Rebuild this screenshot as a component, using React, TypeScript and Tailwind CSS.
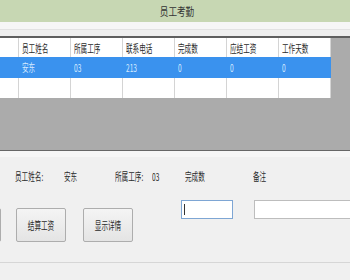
const cols = ["员工姓名", "所属工序", "联系电话", "完成数", "应结工资", "工作天数"];
const row = ["安东", "03", "213", "0", "0", "0"];

const Txt = ({ children, center = false }: { children: React.ReactNode; center?: boolean }) => (
    <span className={`inline-block whitespace-nowrap scale-x-[0.6] ${center ? "origin-center" : "origin-left"}`}>{children}</span>
);

const btn = "shrink-0 h-[34px] mt-[8px] border border-[#adadad] rounded-[2px] bg-gradient-to-b from-[#f4f4f4] to-[#e4e4e4] flex items-center justify-center";

const App = () => {
    return (
        <div className="w-[350px] h-[280px] overflow-hidden bg-[#f0f0f0] flex flex-col text-[11px] leading-none text-[#2a2a2a]" style={{ fontFamily: '"Noto Sans CJK SC", "Liberation Sans", sans-serif' }}>
            {/* title bar */}
            <div className="h-[22px] shrink-0 bg-[#c7d7b3] flex items-center justify-center pl-[4px]">
                <span className="inline-block scale-x-[0.78] text-[#333]">员工考勤</span>
            </div>
            <div className="h-[7px] shrink-0 bg-[#f6f6f6]" />
            <div className="h-[7px] shrink-0 bg-[#eeeeee] border-t border-[#e2e2e2]" />

            {/* grid */}
            <div className="h-[114px] shrink-0 bg-[#ababab] border-t-2 border-[#5e5e5e]">
                <div className="flex h-[19px] bg-white w-[331px]">
                    <div className="w-[19px] border-r border-[#d4d4d4]" />
                    {cols.map((c) => (
                        <div key={c} className="w-[52px] border-r border-[#d4d4d4] flex items-center pl-[3px] pt-[2px]">
                            <Txt>{c}</Txt>
                        </div>
                    ))}
                </div>
                <div className="flex h-[21px] bg-[#3a92ee] w-[331px] text-[#d6eaff]">
                    <div className="w-[19px]" />
                    {row.map((v, i) => (
                        <div key={i} className="w-[52px] flex items-center pl-[3px]">
                            <Txt>{v}</Txt>
                        </div>
                    ))}
                </div>
                <div className="flex h-[20px] bg-white w-[331px]">
                    <div className="w-[19px] border-r border-[#d4d4d4]" />
                    {cols.map((c) => (
                        <div key={c} className="w-[52px] border-r border-[#d4d4d4]" />
                    ))}
                </div>
            </div>

            {/* detail panel */}
            <div className="flex-1 border-t border-[#666] flex flex-col">
                <div className="h-[6px] bg-[#f6f6f6]" />
                <div className="flex items-center pt-[11px] h-[27px]">
                    <div className="w-[15px] shrink-0" />
                    <div className="w-[49px] shrink-0"><Txt>员工姓名:</Txt></div>
                    <div className="w-[51px] shrink-0"><Txt>安东</Txt></div>
                    <div className="w-[37px] shrink-0"><Txt>所属工序:</Txt></div>
                    <div className="w-[33px] shrink-0"><Txt>03</Txt></div>
                    <div className="w-[68px] shrink-0"><Txt>完成数</Txt></div>
                    <div><Txt>备注</Txt></div>
                </div>
                <div className="flex items-start mt-[16px]">
                    <button className={`${btn} -ml-[39px] w-[40px]`} />
                    <button className={`${btn} ml-[15px] w-[50px]`}>
                        <Txt center>结算工资</Txt>
                    </button>
                    <button className={`${btn} ml-[17px] w-[50px]`}>
                        <Txt center>显示详情</Txt>
                    </button>
                    <div className="shrink-0 ml-[48px] w-[52px] h-[19px] bg-white border border-[#7ea6d4] flex items-center pl-[2px]">
                        <div className="w-px h-[11px] bg-[#333]" />
                    </div>
                    <div className="shrink-0 ml-[21px] w-[110px] h-[19px] bg-white border border-[#bdbdbd]" />
                </div>
                <div className="mt-[20px] border-t border-[#d6d6d6] h-px bg-white" />
            </div>
        </div>
    );
};

export default App;
